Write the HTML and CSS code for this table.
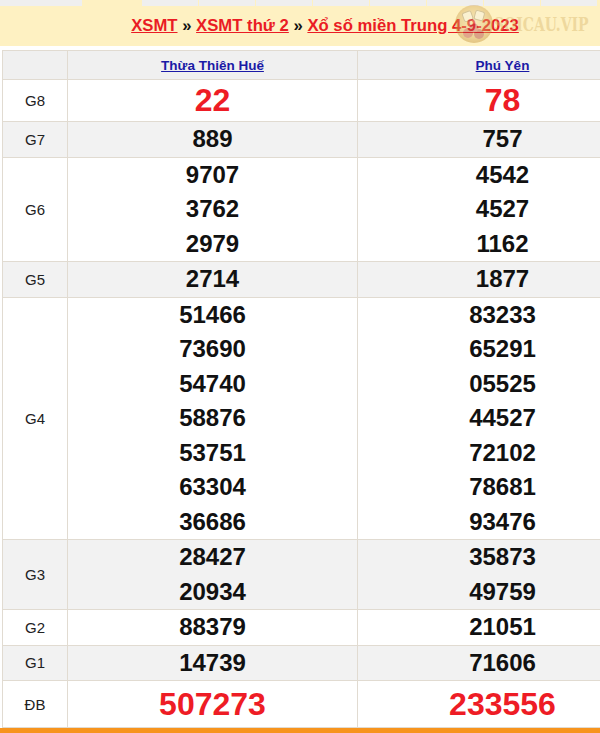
FILE: index.html
```html
<!DOCTYPE html>
<html lang="vi">
<head>
<meta charset="utf-8">
<title>XSMT 4-9-2023</title>
<link rel="stylesheet" href="styles.css">
</head>
<body>
<div class="page">
  <div class="tabs">
    <span class="tab tab-first"></span>
    <span class="tab tab-active"></span>
    <span class="tab"></span>
    <span class="tab"></span>
    <span class="tab"></span>
    <span class="tab"></span>
    <span class="tab"></span>
    <span class="tab"></span>
    <span class="tab"></span>
    <span class="tab"></span>
  </div>
  <div class="title-band">
    <h2 class="title"><a href="#">XSMT</a> » <a href="#">XSMT thứ 2</a> » <a href="#">Xổ số miền Trung 4-9-2023</a></h2>
    <div class="watermark" aria-hidden="true">
      <svg class="wm-logo" width="40" height="42" viewBox="0 0 40 42">
        <defs>
          <radialGradient id="g" cx="50%" cy="45%" r="55%">
            <stop offset="0%" stop-color="#f1dfae"/>
            <stop offset="70%" stop-color="#d8ae5e"/>
            <stop offset="100%" stop-color="#c08a30"/>
          </radialGradient>
        </defs>
        <circle cx="20" cy="21" r="19" fill="url(#g)"/>
        <rect x="9" y="9" width="9" height="9" rx="2" fill="#f6f1e6" stroke="#9a8660" transform="rotate(-20 13 13)"/>
        <rect x="21" y="8" width="9" height="9" rx="2" fill="#f6f1e6" stroke="#9a8660" transform="rotate(15 25 12)"/>
        <circle cx="14" cy="30" r="5" fill="#b84040"/>
        <circle cx="25" cy="31" r="5" fill="#a83535"/>
        <circle cx="20" cy="25" r="4.5" fill="#c05050"/>
      </svg>
      <span class="wm-text">SOICAU.VIP</span>
    </div>
  </div>
  <table class="results">
    <thead>
      <tr>
        <th class="col-label"></th>
        <th class="col-prov"><a href="#">Thừa Thiên Huế</a></th>
        <th class="col-prov"><a href="#">Phú Yên</a></th>
      </tr>
    </thead>
    <tbody>
      <tr class="row-g8">
        <td class="label">G8</td>
        <td><div class="num big">22</div></td>
        <td><div class="num big">78</div></td>
      </tr>
      <tr class="alt">
        <td class="label">G7</td>
        <td><div class="num">889</div></td>
        <td><div class="num">757</div></td>
      </tr>
      <tr>
        <td class="label">G6</td>
        <td><div class="num">9707</div><div class="num">3762</div><div class="num">2979</div></td>
        <td><div class="num">4542</div><div class="num">4527</div><div class="num">1162</div></td>
      </tr>
      <tr class="alt">
        <td class="label">G5</td>
        <td><div class="num">2714</div></td>
        <td><div class="num">1877</div></td>
      </tr>
      <tr>
        <td class="label">G4</td>
        <td><div class="num">51466</div><div class="num">73690</div><div class="num">54740</div><div class="num">58876</div><div class="num">53751</div><div class="num">63304</div><div class="num">36686</div></td>
        <td><div class="num">83233</div><div class="num">65291</div><div class="num">05525</div><div class="num">44527</div><div class="num">72102</div><div class="num">78681</div><div class="num">93476</div></td>
      </tr>
      <tr class="alt">
        <td class="label">G3</td>
        <td><div class="num">28427</div><div class="num">20934</div></td>
        <td><div class="num">35873</div><div class="num">49759</div></td>
      </tr>
      <tr>
        <td class="label">G2</td>
        <td><div class="num">88379</div></td>
        <td><div class="num">21051</div></td>
      </tr>
      <tr class="alt">
        <td class="label">G1</td>
        <td><div class="num">14739</div></td>
        <td><div class="num">71606</div></td>
      </tr>
      <tr class="row-db">
        <td class="label">ĐB</td>
        <td><div class="num big db">507273</div></td>
        <td><div class="num big db">233556</div></td>
      </tr>
    </tbody>
  </table>
  <div class="footer-bar"></div>
</div>
</body>
</html>
```
FILE: styles.css
```css
html, body {
  margin: 0;
  padding: 0;
  background: #ffffff;
  overflow: hidden;
}

.page {
  width: 650px;
  font-family: "Liberation Sans", Arial, sans-serif;
}

.tabs {
  display: flex;
  height: 6px;
  background: #fef1c2;
  gap: 1px;
}

.tab {
  width: 56px;
  height: 6px;
  background: #efefef;
  flex: none;
}

.tab-first {
  width: 82px;
}

.tab-active {
  width: 58px;
  background: #fef1c2;
}

.title-band {
  position: relative;
  height: 40px;
  background: #fef1c2;
  display: flex;
  align-items: center;
  justify-content: center;
}

.title {
  margin: 0;
  font-size: 16.7px;
  font-weight: bold;
  color: #111111;
  line-height: 20px;
  position: relative;
  z-index: 1;
}

.title a {
  color: #ea1c24;
  text-decoration: underline;
}

.watermark {
  position: absolute;
  left: 454px;
  top: -4px;
  height: 44px;
  display: flex;
  align-items: center;
  opacity: 0.42;
  z-index: 2;
  pointer-events: none;
}

.wm-logo {
  display: block;
}

.wm-text {
  font-family: "DejaVu Serif", serif;
  font-weight: bold;
  font-size: 14px;
  color: #d9b66c;
  margin-left: 0;
  transform: scaleY(1.3);
  white-space: nowrap;
}

.results {
  margin: 4px 0 0 2px;
  width: 646px;
  border-collapse: collapse;
  table-layout: fixed;
}

.results th,
.results td {
  border: 1px solid #e1dbd1;
  padding: 0;
  text-align: center;
  vertical-align: middle;
}

.results th {
  height: 28px;
  background: #f0f0f0;
  font-size: 13.5px;
  font-weight: bold;
}

.results th a {
  color: #1a1aa6;
  text-decoration: underline;
}

.col-label {
  width: 64px;
}

.col-prov {
  width: 289px;
}

.results tr.alt td {
  background: #f2f2f2;
}

.label {
  font-size: 15px;
  color: #222222;
}

.num {
  font-size: 24px;
  font-weight: bold;
  color: #111111;
  line-height: 34.5px;
  height: 34.5px;
}

.num.big {
  font-size: 32px;
  color: #ee1c25;
  line-height: 41px;
  height: 41px;
}

.num.big.db {
  line-height: 46px;
  height: 46px;
}

.footer-bar {
  height: 6px;
  background: #f7941d;
}
```
